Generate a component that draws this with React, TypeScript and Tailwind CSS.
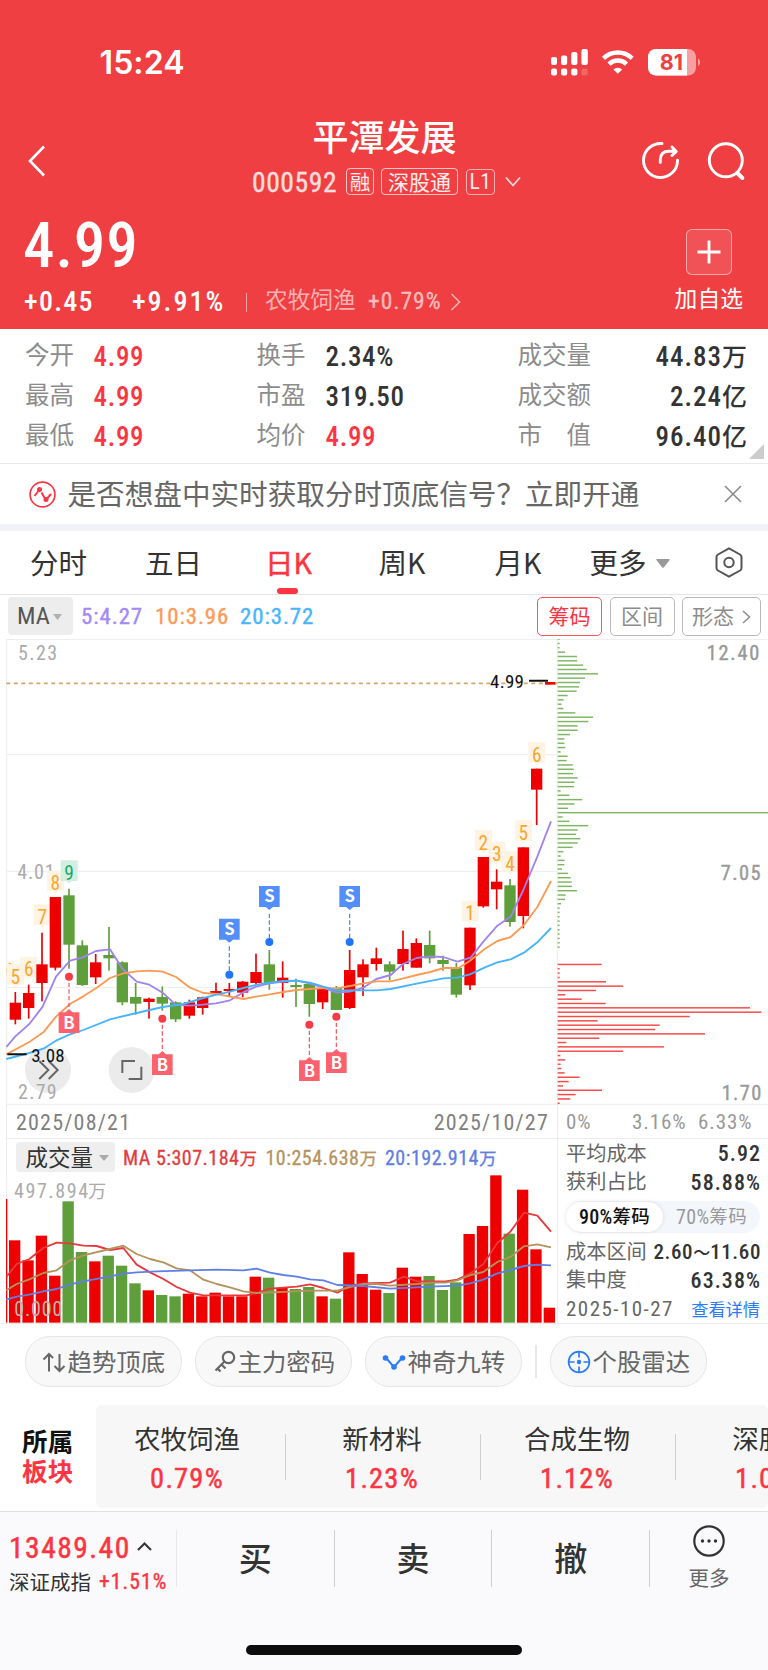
import type { ReactNode } from 'react';

const NUM = "font-['Roboto_Condensed','Noto_Sans_CJK_SC',sans-serif]";
const NUM_FAMILY = "'Roboto Condensed','Noto Sans CJK SC',sans-serif";
const RED = '#ee0000';
const GREEN = '#5f9f3b';

// x centre, high, body top, body bottom, low, rising
type Candle = [number, number, number, number, number, boolean];
const candles: Candle[] = [
  [46, 1086, 1118, 1169, 1183, true],
  [86, 1064, 1089, 1134, 1166, true],
  [126, 908, 1003, 1059, 1114, true],
  [166, 801, 801, 1013, 1021, true],
  [207, 776, 796, 944, 1016, false],
  [247, 931, 946, 1065, 1068, false],
  [287, 972, 997, 1042, 1062, true],
  [327, 891, 975, 985, 1022, false],
  [367, 994, 997, 1117, 1126, false],
  [407, 1059, 1101, 1121, 1154, false],
  [447, 1103, 1106, 1116, 1166, true],
  [487, 1069, 1101, 1121, 1142, false],
  [527, 1114, 1117, 1168, 1176, false],
  [568, 1109, 1117, 1157, 1166, true],
  [608, 1100, 1102, 1134, 1154, true],
  [648, 1058, 1083, 1090, 1090, true],
  [688, 1059, 1077, 1083, 1100, true],
  [728, 1053, 1055, 1088, 1102, true],
  [768, 971, 1026, 1059, 1062, true],
  [808, 960, 1003, 1059, 1079, false],
  [848, 994, 1043, 1059, 1103, true],
  [888, 1046, 1065, 1071, 1131, false],
  [928, 1058, 1062, 1122, 1160, false],
  [968, 1075, 1077, 1117, 1137, true],
  [1009, 1068, 1074, 1140, 1140, false],
  [1049, 960, 1020, 1134, 1137, true],
  [1089, 988, 1003, 1042, 1098, true],
  [1129, 953, 985, 1002, 1022, true],
  [1169, 994, 1003, 1025, 1051, false],
  [1209, 902, 957, 1002, 1022, true],
  [1249, 925, 939, 1013, 1013, true],
  [1289, 902, 945, 985, 1000, false],
  [1329, 977, 990, 1002, 1022, false],
  [1369, 999, 1014, 1094, 1103, false],
  [1410, 893, 893, 1066, 1080, true],
  [1450, 681, 681, 829, 833, true],
  [1490, 718, 755, 778, 838, true],
  [1530, 747, 766, 876, 890, false],
  [1570, 652, 652, 858, 895, true],
  [1610, 416, 416, 479, 585, true],
];

const ma5 =
  '19,1251 46,1219 88,1182 128,1130 168,1040 210,992 248,982 288,963 330,958 368,1017 410,1055 448,1064 488,1088 527,1124 568,1127 608,1124 648,1120 690,1111 728,1088 768,1070 810,1060 850,1055 890,1052 928,1060 970,1073 1010,1088 1050,1085 1090,1073 1129,1047 1172,1035 1209,1002 1250,984 1290,979 1330,981 1372,995 1412,983 1450,935 1492,887 1532,860 1570,780 1612,680 1653,574';
const ma10 =
  '19,1273 88,1236 130,1207 168,1160 210,1122 250,1099 290,1073 330,1044 370,1030 410,1024 448,1022 488,1025 528,1041 570,1073 610,1089 650,1092 690,1100 730,1107 768,1100 810,1093 850,1086 890,1080 928,1077 970,1074 1010,1075 1050,1068 1090,1060 1130,1054 1172,1054 1210,1045 1250,1035 1290,1026 1332,1014 1376,1014 1410,992 1455,956 1492,933 1532,921 1572,885 1612,831 1653,753';
const ma20 =
  '19,1287 88,1269 130,1256 168,1232 210,1213 250,1200 330,1168 410,1149 488,1131 550,1122 610,1104 650,1094 690,1085 730,1074 770,1064 810,1058 850,1053 890,1052 930,1058 970,1070 1010,1081 1130,1081 1172,1077 1250,1061 1330,1045 1372,1043 1410,1033 1455,1012 1492,997 1532,988 1572,968 1612,937 1653,894';

const turns: [string, number, number, boolean?][] = [
  ['5', 46, 1042],
  ['6', 86, 1020],
  ['7', 127, 863],
  ['8', 166, 762],
  ['9', 207, 731, true],
  ['1', 1410, 852],
  ['2', 1450, 640],
  ['3', 1490, 675],
  ['4', 1530, 703],
  ['5', 1570, 611],
  ['6', 1610, 376],
];

const sells: [number, number][] = [[688, 1034], [808, 936], [1049, 936]];
const buys: [number, number][] = [[207, 1040], [487, 1166], [928, 1184], [1009, 1160]];

const chips = [
  6, 6, 6, 22, 58, 59, 76, 87, 121, 82, 67, 64, 57, 30, 18, 12, 17, 53, 106, 92, 60, 60, 37, 20, 20, 23, 9, 30, 27,
  45, 48, 46, 60, 51, 49, 9, 35, 74, 50, 31, 631, 15, 35, 92, 60, 55, 68, 60, 45, 17, 9, 21, 20, 13, 31, 39, 42, 43,
  58, 24, 22, 10, 6, 6, 6, 6, 6, 6, 6, 6, 6, 6, 0, 0, 0, 132, 6, 6, 6, 145, 196, 115, 23, 72, 144, 577, 611, 396,
  120, 306, 292, 442, 125, 26, 319, 196, 8, 23, 9, 11, 21, 66, 33, 16, 133, 54, 38, 6,
];

const volumes: [number, boolean][] = [
  [437, true], [497, true], [423, true], [543, true], [320, false], [472, false], [500, true], [483, false],
  [513, false], [566, false], [587, true], [601, false], [605, false], [597, true], [605, true], [594, true],
  [605, true], [605, true], [546, true], [549, false], [580, true], [583, false], [577, false], [605, true],
  [612, false], [473, true], [538, true], [585, true], [595, false], [519, true], [546, true], [544, false],
  [586, false], [563, false], [418, true], [394, true], [242, true], [417, false], [285, true], [464, true],
  [639, true],
];
const vol5 =
  '19,547 50,508 88,493 130,460 170,444 210,446 250,453 290,454 330,466 370,460 410,510 450,533 490,553 530,577 570,594 610,602 740,602 770,595 810,582 850,579 890,576 930,569 970,580 1012,594 1050,573 1090,566 1170,564 1212,546 1252,560 1290,560 1336,560 1372,555 1410,537 1450,508 1492,445 1532,410 1572,354 1612,363 1653,411';
const vol10 =
  '19,587 50,568 88,554 130,535 170,527 210,497 250,482 330,463 370,453 410,478 450,493 490,503 530,521 570,527 610,555 650,568 690,578 730,590 770,595 870,591 930,588 1012,588 1050,577 1090,568 1130,568 1170,573 1250,568 1290,564 1336,564 1372,557 1412,541 1450,532 1492,502 1532,486 1572,455 1612,449 1653,458';
const vol20 =
  '19,615 50,606 88,600 130,590 170,583 210,569 250,560 330,545 370,537 410,533 470,530 570,527 650,525 730,527 770,522 810,534 850,541 890,546 930,554 970,557 1012,571 1090,574 1170,582 1250,578 1290,576 1372,573 1410,566 1450,555 1492,536 1532,526 1572,514 1612,510 1653,512';

function StatusBar() {
  return (
    <div className="flex h-[124px] items-start pl-[99.500px] pt-[47px]">
      <span className="w-[450.500px] font-['Inter',sans-serif] text-[32px] font-semibold leading-8 tracking-[0.100px]">15:24</span>
      <svg className="mt-[2px] h-[27px] w-[154px]" viewBox="0 0 154 27" fill="#fff">
        <rect x="1" y="8" width="6" height="8" rx="2" />
        <rect x="11" y="6.500" width="6.200" height="9.500" rx="2" />
        <rect x="21.200" y="3" width="6.200" height="13" rx="2" />
        <rect x="31.400" y="0" width="6.400" height="16" rx="2" />
        <rect x="1" y="19.500" width="6" height="7" rx="2" />
        <rect x="11" y="19.500" width="6.200" height="7" rx="2" />
        <rect x="21.200" y="19.500" width="6.200" height="7" rx="2" />
        <rect x="31.400" y="19.500" width="6.400" height="7" rx="2" opacity="0.2" />
        <g fill="none" stroke="#fff" strokeWidth="4.400">
          <path d="M53.500 9.300a20.500 20.500 0 0 1 28.600 0" />
          <path d="M59 15.100a12.600 12.600 0 0 1 17.600 0" />
        </g>
        <path d="M67.800 24.800l-4.400-4.400a6.400 6.400 0 0 1 8.800 0z" />
        <rect x="98" y="0" width="48" height="26.500" rx="8" opacity="0.5" />
        <path d="M106 0h31v26.500h-31a8 8 0 0 1-8-8V8a8 8 0 0 1 8-8z" />
        <path d="M148 9.500c2.800 1 2.800 6.400 0 7.400z" opacity="0.5" />
        <text x="121.500" y="21" textAnchor="middle" fontFamily="Inter, sans-serif" fontWeight="700" fontSize="21.500" fill="#ef3f42">81</text>
      </svg>
    </div>
  );
}

function Header() {
  return (
    <header className="h-[329px] bg-[#ef3f42] text-white">
      <StatusBar />
      <div className="-mt-[8px] flex h-[89px]">
        <svg className="ml-[27px] mt-[29px] h-[32px] w-[21px]" viewBox="0 0 21 32" fill="none" stroke="#fff" strokeWidth="2.600">
          <path d="M17 1.500L3 16l14 14.500" />
        </svg>
        <div className="flex w-[672px] shrink-0 pl-[204px]">
          <div className="w-[274px]">
            <div className="ml-[-9px] -mt-[2px] text-center text-[36px] font-medium leading-[42px]">平潭发展</div>
            <div className="mt-[10px] flex h-[31px] items-center whitespace-nowrap">
              <span className={`${NUM} w-[94px] pt-[2px] text-[27.500px] leading-none tracking-[0.600px] text-white/80 [-webkit-text-stroke:0.3px]`}>000592</span>
              <span className="flex h-[27px] w-[28px] items-center justify-center rounded-[4px] border-[1.500px] border-white/70 pb-px text-[20.500px] leading-none text-white/90">融</span>
              <span className="ml-[7px] flex h-[27px] w-[77px] items-center justify-center rounded-[4px] border-[1.500px] border-white/70 pb-px text-[21px] leading-none text-white/90">深股通</span>
              <span className={`${NUM} ml-[8px] flex h-[26px] w-[29px] items-center justify-center rounded-[4px] border-[1.500px] border-white/60 text-[21.500px] leading-none tracking-[0.500px] text-white/90`}>L1</span>
              <svg className="ml-[10px] h-[12px] w-[16px]" viewBox="0 0 16 12" fill="none" stroke="#fff" strokeOpacity="0.8" strokeWidth="1.800">
                <path d="M1 1.500l7 8 7-8" />
              </svg>
            </div>
          </div>
        </div>
        <svg className="-ml-[78px] mt-[25px] h-[40px] w-[106px] shrink-0" viewBox="0 0 106 40" fill="none" stroke="#fff" strokeWidth="2.900" strokeLinecap="round">
          <path d="M20 2.500a17 17 0 1 0 15.500 16.800" />
          <path d="M18.300 21.500v-2.700q.2-8.500 8.500-8.500h6.500M30 6l4.300 4.500-4.300 4" strokeLinejoin="round" />
          <circle cx="83.800" cy="19.300" r="16.500" />
          <path d="M95.300 32l5 5" strokeWidth="4" />
        </svg>
      </div>
      <div className="flex h-[124px] justify-between pl-[24px] pr-[25px]">
        <div>
          <div className={`${NUM} mt-[8px] ml-[-1px] text-[63px] font-medium leading-[65px] tracking-[0.900px]`}>4.99</div>
          <div className={`${NUM} mt-[9px] flex h-[30px] items-center whitespace-nowrap leading-none`}>
            <span className="w-[108px] text-[28px] font-medium tracking-[1.300px]">+0.45</span>
            <span className="w-[114px] text-[28px] font-medium tracking-[2px]">+9.91%</span>
            <span className="h-[19px] w-px bg-white/50" />
            <span className="ml-[18px] w-[103px] pb-[5px] font-['Noto_Sans_CJK_SC',sans-serif] text-[22.700px] text-white/60">农牧饲渔</span>
            <span className="text-[23.500px] tracking-[1px] text-white/60 [-webkit-text-stroke:0.3px]">+0.79%</span>
            <svg className="ml-[8px] h-[18px] w-[12px]" viewBox="0 0 12 18" fill="none" stroke="#fff" strokeOpacity="0.6" strokeWidth="1.600">
              <path d="M1.500 1l8 8-8 8" />
            </svg>
          </div>
        </div>
        <div className="flex flex-col items-center pt-[24px]">
          <div className="-ml-px flex h-[46px] w-[46px] items-center justify-center rounded-[6px] border-[1.500px] border-white/50 bg-white/10">
            <svg className="h-[24px] w-[24px]" viewBox="0 0 24 24" stroke="#fff" strokeWidth="2.800">
              <path d="M12 0.500v23M0.500 12h23" />
            </svg>
          </div>
          <div className="-ml-px mt-[11px] text-[22.800px] leading-[24px]">加自选</div>
        </div>
      </div>
    </header>
  );
}

const stats = [
  ['今开', '4.99', true, '换手', '2.34%', false, '成交量', '44.83万'],
  ['最高', '4.99', true, '市盈', '319.50', false, '成交额', '2.24亿'],
  ['最低', '4.99', true, '均价', '4.99', true, '市　值', '96.40亿'],
] as const;

function Stats() {
  return (
    <section className="flex h-[135px] border-b border-[#e9e9e9] pt-[8px]">
      <div className="w-[747px] pl-[25px]">
        {stats.map((r) => (
          <div key={r[0]} className={`${NUM} flex h-[40px] items-center text-[27px] font-medium leading-none tracking-[0.700px] text-[#333]`}>
            <span className="w-[68.500px] pb-[6px] font-['Noto_Sans_CJK_SC',sans-serif] text-[24.500px] font-normal tracking-normal text-[#8c8c8c]">{r[0]}</span>
            <span className="w-[163px] text-[#fb3541]">{r[1]}</span>
            <span className="w-[69px] pb-[6px] font-['Noto_Sans_CJK_SC',sans-serif] text-[24.500px] font-normal tracking-normal text-[#8c8c8c]">{r[3]}</span>
            <span className={r[5] ? 'w-[192px] text-[#fb3541]' : 'w-[192px]'}>{r[4]}</span>
            <span className="pb-[6px] font-['Noto_Sans_CJK_SC',sans-serif] text-[24.500px] font-normal tracking-normal text-[#8c8c8c]">{r[6]}</span>
            <span className="ml-auto flex items-baseline tracking-[1px]">
              {r[7].slice(0, -1)}
              <span className="text-[25px] tracking-normal">{r[7].slice(-1)}</span>
            </span>
          </div>
        ))}
      </div>
      <svg className="ml-[2px] mt-[107px] h-[15px] w-[15px]" viewBox="0 0 15 15">
        <path d="M15 0v15H0z" fill="#ccc" />
      </svg>
    </section>
  );
}

function Banner() {
  return (
    <section className="flex h-[60px] items-center pl-[28.500px] text-[#666]">
      <svg className="h-[27px] w-[27px]" viewBox="0 0 27 27" fill="none" stroke="#fb3541" strokeWidth="1.700">
        <circle cx="13.500" cy="13.500" r="12.400" />
        <path d="M5.500 15l4-5M12.500 11.500l3.500 6M18.500 17l3.500-4" strokeWidth="2" />
        <circle cx="10.500" cy="8.500" r="2.500" fill="#fb3541" stroke="none" />
        <circle cx="17" cy="18.500" r="2.500" fill="#fb3541" stroke="none" />
      </svg>
      <span className="ml-[12px] w-[656.500px] whitespace-nowrap pb-[2px] text-[28.600px] leading-none">是否想盘中实时获取分时顶底信号？立即开通</span>
      <svg className="h-[18px] w-[18px]" viewBox="0 0 18 18" stroke="#8a8a8a" strokeWidth="1.600">
        <path d="M1 1l16 16M17 1L1 17" />
      </svg>
    </section>
  );
}

function Tabs() {
  return (
    <nav className="flex h-[64px] border-b border-[#e4e4e4] pl-[30px] text-[28.500px] leading-[62px] text-[#333]">
      <span className="w-[115px]">分时</span>
      <span className="w-[120px]">五日</span>
      <div className="flex w-[113.500px] flex-col text-[#fb3541]">
        <span className="h-[57px] [-webkit-text-stroke:0.5px]">日K</span>
        <span className="ml-[12px] h-[6px] w-[21px] shrink-0 rounded-[3px] bg-[#fb3541]" />
      </div>
      <span className="w-[116px]">周K</span>
      <span className="w-[95px]">月K</span>
      <span className="w-[66.500px]">更多</span>
      <svg className="mt-[28px] h-[9px] w-[14px]" viewBox="0 0 14 9">
        <path d="M1 0h12q1.200 0 .6 1L8 8.300q-1 1-2 0L.4 1Q-.2 0 1 0z" fill="#999" />
      </svg>
      <svg className="ml-[45px] mt-[16px] h-[31px] w-[28px]" viewBox="0 0 28 31" fill="none" stroke="#555" strokeWidth="2">
        <path d="M14 1.300L25 7.500q1.500 1 1.500 2.600v10.800q0 1.600-1.500 2.600L14 29.700 3 23.500q-1.500-1-1.500-2.600V10.100q0-1.600 1.500-2.600z" strokeLinejoin="round" />
        <circle cx="14" cy="15.500" r="4.700" />
      </svg>
    </nav>
  );
}

function ToolButton({ active, wide, children }: { active?: boolean; wide?: boolean; children: ReactNode }) {
  return (
    <span
      className={`flex h-[39px] items-center justify-center gap-[8px] rounded-[5px] border-[1.500px] pb-[2px] text-[21px] leading-none ${
        active ? 'border-[#fb5560] text-[#fb3541]' : 'border-[#b8b8b8] text-[#8c8c8c]'
      } ${wide ? 'w-[79px]' : 'w-[65px]'}`}
    >
      {children}
    </span>
  );
}

function MaRow() {
  return (
    <div className={`${NUM} flex h-[44px] pl-[8px] pt-[2px] leading-none`}>
      <span className="flex h-[38px] w-[65px] items-center rounded-[4px] bg-[#ededed] pl-[9px] pt-px text-[24.500px] text-[#555]">
        MA
        <svg className="ml-[3px] h-[6px] w-[9px]" viewBox="0 0 9 6"><path d="M0 0h9L4.500 6z" fill="#b0b0b0" /></svg>
      </span>
      <span className="ml-[8px] flex h-[38px] w-[456px] items-center pt-[2px] text-[22.800px] tracking-[0.950px] [-webkit-text-stroke:0.4px]">
        <span className="w-[74px] text-[#a38af5]">5:4.27</span>
        <span className="w-[85px] text-[#fb9b5a]">10:3.96</span>
        <span className="text-[#48b5fb]">20:3.72</span>
      </span>
      <span className="flex gap-[7.500px] font-['Noto_Sans_CJK_SC',sans-serif] tracking-normal">
        <ToolButton active>筹码</ToolButton>
        <ToolButton>区间</ToolButton>
        <ToolButton wide>
          形态
          <svg className="mt-[2px] h-[14px] w-[9px]" viewBox="0 0 9 14" fill="none" stroke="#8c8c8c" strokeWidth="1.500"><path d="M1 1l6.500 6L1 13" /></svg>
        </ToolButton>
      </span>
    </div>
  );
}

function PriceChart() {
  return (
    <svg className="h-[466px] w-[768px]" viewBox="0 27 2304 1398" fontFamily={NUM_FAMILY}>
      <g stroke="#ececec" strokeWidth="3">
        <path d="M19 28H2304M19 374H1673M19 724H1673M19 1073H1673M19 1423H2304M20 27V1425M1672 27V1425" fill="none" />
      </g>
      <path d="M19 160H1672" stroke="#d6a76c" strokeWidth="5" strokeDasharray="12 10.500" />
      <g fill="#ababab" fontSize="60">
        <text x="54" y="90" textLength="117">5.23</text>
        <text x="52" y="748" textLength="112">4.01</text>
      </g>
      <circle cx="144" cy="1320" r="69" fill="#ebebeb" />
      <circle cx="395" cy="1320" r="69" fill="#ebebeb" />
      <text x="54" y="1408" textLength="116" fill="#ababab" fontSize="60">2.79</text>
      <g fill="none" stroke="#666" strokeWidth="6">
        <path d="M118 1293l27 27-27 27M146 1293l27 27-27 27" />
        <path d="M405 1293H367v36M386 1347h38v-37" />
      </g>

      <rect x="20" y="993" width="22" height="62" fill="#fff3e4" />
      <svg x="20" y="993" width="20" height="70" viewBox="20 993 20 70">
        <text x="12" y="1037" fontSize="54" fill="#f9a62b">4</text>
      </svg>
      {turns.map(([, x, y, hot]) => (
        <path key={x} d={`M${x - 25} ${y - 40}h51v62h-18l-8 8-8-8h-17z`} fill={hot ? '#d2efe1' : '#fff3e4'} />
      ))}

      {candles.map(([x, hi, top, bottom, lo, up]) => (
        <g key={x} fill={up ? RED : GREEN}>
          <rect x={x - 2.5} y={hi} width="5" height={lo - hi} />
          <rect x={x - 17} y={top} width="34" height={bottom - top} />
        </g>
      ))}
      <rect x="1635" y="156" width="31" height="8" fill={RED} />

      <g fill="none" strokeWidth="5.500" strokeLinejoin="round">
        <polyline points={ma5} stroke="#a084ee" />
        <polyline points={ma10} stroke="#fb9a55" />
        <polyline points={ma20} stroke="#45b4fb" />
      </g>

      {turns.map(([n, x, y, hot]) => (
        <text key={x} x={x} y={y + 19} textAnchor="middle" fontSize="58" fill={hot ? '#1ba866' : '#f9a62b'}>{n}</text>
      ))}

      {sells.map(([x, y]) => (
        <g key={x} fontFamily="'Noto Sans CJK SC',sans-serif">
          <path d={`M${x} ${y - 85}V${y - 12}`} stroke="#4a7fe8" strokeWidth="3.500" strokeDasharray="13 7" />
          <circle cx={x} cy={y} r="12" fill="#2274fb" />
          <path d={`M${x - 31} ${y - 168}h62v63h-20l-11 9-11-9h-20z`} fill="#528ffb" />
          <text x={x} y={y - 119} textAnchor="middle" fontSize="50" fontWeight="700" fill="#fff">S</text>
        </g>
      ))}
      {buys.map(([x, y]) => (
        <g key={x} fontFamily="'Noto Sans CJK SC',sans-serif">
          <path d={`M${x} ${y + 18}V${y + 96}`} stroke="#f0525c" strokeWidth="3.500" strokeDasharray="13 7" />
          <circle cx={x} cy={y} r="12" fill="#f73a45" />
          <path d={`M${x - 31} ${y + 107}h20l11-10 11 10h20v62h-62z`} fill="#fb626e" />
          <text x={x} y={y + 156} textAnchor="middle" fontSize="50" fontWeight="700" fill="#fff">B</text>
        </g>
      ))}

      <g fill="#111" fontSize="57">
        <path d="M22 1273h58M1587 152h57" stroke="#111" strokeWidth="6" />
        <text x="94" y="1295" textLength="100">3.08</text>
        <text x="1470" y="173" textLength="102">4.99</text>
      </g>

      {chips.map((w, i) =>
        w ? <rect key={i} x="1673" y={25.2 + i * 13.013} width={w} height="4.400" fill={i < 73 ? '#7fb664' : '#f34a4a'} /> : null,
      )}
      <g fill="#999" stroke="#999" strokeWidth="1.200" fontSize="61" textAnchor="end">
        <text x="2278" y="91" textLength="158">12.40</text>
        <text x="2282" y="749" textLength="120">7.05</text>
        <text x="2284" y="1409" textLength="119">1.70</text>
      </g>
    </svg>
  );
}

function DateRow() {
  return (
    <div className={`${NUM} ml-[6px] flex h-[34px] border-b border-l border-[#ececec] pl-[9px] text-[22px] leading-[35px] tracking-[1.200px] text-[#808080]`}>
      <span className="w-[117px]">2025/08/21</span>
      <span className="w-[425px] border-r border-[#ececec] pr-[8px] text-right">2025/10/27</span>
      <span className="flex pl-[8px] text-[21px] tracking-[0.900px] text-[#999]">
        <span className="w-[66px]">0%</span>
        <span className="w-[66px]">3.16%</span>
        <span>6.33%</span>
      </span>
    </div>
  );
}

function VolumePanel() {
  return (
    <div className="w-[558px] border-r border-[#ececec]">
      <div className="ml-[6px] flex h-[35px] items-center border-l border-[#ececec] pl-[9px] pt-px">
        <span className="flex h-[30px] w-[99px] items-center rounded-[4px] bg-[#eee] pb-[2px] pl-[9.500px] text-[22.500px] leading-none text-[#333]">
          成交量
          <svg className="ml-[6px] mt-[3px] h-[6px] w-[10px]" viewBox="0 0 10 6"><path d="M0 0h10L5 6z" fill="#aaa" /></svg>
        </span>
        <span className={`${NUM} ml-[8px] flex items-center whitespace-nowrap pt-[3px] text-[20px] leading-none tracking-[0.500px] [-webkit-text-stroke:0.3px]`}>
          <span className="w-[142.500px] text-[#e53a3e]">MA 5:307.184<span className="text-[17.500px]">万</span></span>
          <span className="w-[119.500px] text-[#b5935e]">10:254.638<span className="text-[17.500px]">万</span></span>
          <span className="text-[#5f7de2]">20:192.914<span className="text-[17.500px]">万</span></span>
        </span>
      </div>
      <svg className="h-[149px] w-[557px]" viewBox="0 238 1671 447" fontFamily={NUM_FAMILY}>
        <path d="M20 238V313" stroke="#ececec" strokeWidth="3" />
        <rect x="18" y="313" width="4" height="371" fill={RED} />
        {volumes.map(([top, up], i) => (
          <rect key={i} x={27 + i * 40.1} y={top} width="34" height={684 - top} fill={up ? RED : GREEN} />
        ))}
        <g fill="none" strokeWidth="5.500" strokeLinejoin="round">
          <polyline points={vol5} stroke="#e8383c" />
          <polyline points={vol10} stroke="#b3925c" />
          <polyline points={vol20} stroke="#5f7fe4" />
        </g>
        <g fill="#ababab">
          <text x="42" y="311" fontSize="60" textLength="222">497.894</text>
          <text x="264" y="311" fontSize="55">万</text>
          <text x="43" y="663" fontSize="60" textLength="144" fill="#b9b3b0">0.000</text>
        </g>
      </svg>
    </div>
  );
}

function CostRow({ label, value }: { label: string; value: ReactNode }) {
  return (
    <div className="flex h-[28.500px] items-center justify-between whitespace-nowrap leading-none">
      <span className="pb-[3px] text-[20.200px] text-[#666]">{label}</span>
      <span className={`${NUM} mr-[-1px] text-[22px] font-medium tracking-[1.050px] text-[#333]`}>{value}</span>
    </div>
  );
}

function CostPanel() {
  return (
    <div className="w-[210px] pl-[8px] pr-[8px] pt-px">
      <CostRow label="平均成本" value="5.92" />
      <CostRow label="获利占比" value="58.88%" />
      <div className={`${NUM} mt-[4px] flex h-[32px] items-center rounded-full bg-[#f3f7fc] text-[20px] leading-none`}>
        <span className="flex h-[30px] w-[97px] items-center justify-center rounded-full bg-white font-medium tracking-[0.300px] text-[#111] shadow-[0_0_4px_rgba(0,0,0,0.12)]">90%<span className="text-[18.500px]">筹码</span></span>
        <span className="flex flex-1 items-center justify-center tracking-[0.300px] text-[#999]">70%<span className="text-[18.500px]">筹码</span></span>
      </div>
      <div className="mt-[5px]">
        <CostRow
          label="成本区间"
          value={<span className="text-[21px] tracking-[0.600px]">2.60<span className="text-[17px] tracking-normal">～</span>11.60</span>}
        />
        <CostRow label="集中度" value="63.38%" />
      </div>
      <div className="flex h-[29px] items-center justify-between leading-none">
        <span className={`${NUM} text-[21px] tracking-[1.450px] text-[#666]`}>2025-10-27</span>
        <span className="whitespace-nowrap pb-[2px] text-[17.200px] text-[#2b7bfa]">查看详情</span>
      </div>
    </div>
  );
}

function Pill({ icon, children }: { icon: ReactNode; children: ReactNode }) {
  return (
    <span className="flex h-[51px] w-[157px] items-center rounded-[25px] border border-[#e6e6e6] bg-[#f8f8f8] pl-[16px]">
      {icon}
      <span className="ml-[1.500px] whitespace-nowrap text-[24.400px] leading-none text-[#666]">{children}</span>
    </span>
  );
}

function Tools() {
  return (
    <section className="flex h-[81px] items-start gap-[13px] pl-[25px] pt-[12px]">
      <Pill
        icon={
          <svg className="h-[24px] w-[24px]" viewBox="0 0 24 24" fill="none" stroke="#666" strokeWidth="2">
            <path d="M7 21.500V5M1.500 9.500L7 4l4 4M17.500 4v16.500M12.500 16l5 5 5-5" />
          </svg>
        }
      >
        趋势顶底
      </Pill>
      <Pill
        icon={
          <svg className="h-[24px] w-[24px]" viewBox="0 0 24 24" fill="none" stroke="#666" strokeWidth="2.200">
            <circle cx="16.500" cy="7.500" r="5.700" />
            <path d="M12.500 11.500L3.500 20.500M9.500 14.500l4 4M5.500 18.500l3 3" />
          </svg>
        }
      >
        主力密码
      </Pill>
      <Pill
        icon={
          <svg className="h-[24px] w-[24px]" viewBox="0 0 24 24" fill="none" stroke="#2b7bfa" strokeWidth="2">
            <path d="M4 8l8 9 8-9" />
            <g fill="#2b7bfa" stroke="none">
              <circle cx="3.500" cy="8" r="2.800" />
              <circle cx="12" cy="17" r="2.800" />
              <circle cx="20.500" cy="8" r="2.800" />
            </g>
          </svg>
        }
      >
        神奇九转
      </Pill>
      <span className="mt-[9px] h-[33px] w-[2px] bg-[#e8e8e8]" />
      <Pill
        icon={
          <svg className="h-[24px] w-[24px]" viewBox="0 0 24 24" fill="none" stroke="#2b7bfa" strokeWidth="1.700">
            <circle cx="12" cy="12" r="10.400" />
            <path d="M12 1.500v6M12 16.500v6M1.500 12h6M16.500 12h6" />
            <circle cx="12" cy="12" r="2.200" fill="#2b7bfa" stroke="none" />
          </svg>
        }
      >
        个股雷达
      </Pill>
    </section>
  );
}

const sectors = [['农牧饲渔', '0.79%'], ['新材料', '1.23%'], ['合成生物', '1.12%'], ['深股通', '1.09%']];

function Sectors() {
  return (
    <section className="flex h-[107px] overflow-hidden border-b border-[#e0e0e0]">
      <div className="w-[96px] shrink-0 pl-[22px] pt-[19.500px] text-[25.500px] font-bold leading-[30px] tracking-[0.200px]">
        <div className="text-[#111]">所属</div>
        <div className="text-[#fb3541]">板块</div>
      </div>
      <div className="flex h-[103px] w-[672px] shrink-0 overflow-hidden rounded-[6px] bg-[#f7f7f7]">
        {sectors.map(([name, pct], i) => (
          <div key={name} className={i === 0 ? 'flex w-[190px] shrink-0 items-center' : 'flex w-[195px] shrink-0 items-center'}>
            <div className={i === 0 ? 'w-[189px] pr-[7px] pt-[3px] text-center' : 'w-[194px] pr-[2px] pt-[3px] text-center'}>
              <div className="text-[26.500px] leading-[32px] text-[#333]">{name}</div>
              <div className={`${NUM} mt-[9px] text-[28.500px] leading-[32px] tracking-[1.200px] text-[#fb3541] [-webkit-text-stroke:0.5px]`}>{pct}</div>
            </div>
            {i < 3 && <span className="h-[46px] w-px bg-[#cfcfcf]" />}
          </div>
        ))}
      </div>
    </section>
  );
}

function BottomBar() {
  return (
    <footer className="h-[159px] bg-[#fafafc]">
      <div className="flex h-[133px]">
        <div className="w-[176px] pl-[9px] pt-[20px]">
          <div className={`${NUM} flex h-[32px] items-center pt-px text-[29.500px] leading-none tracking-[1.500px] text-[#fb3541] [-webkit-text-stroke:0.5px]`}>
            13489.40
            <svg className="mb-[4px] ml-[6px] h-[9px] w-[15px] shrink-0" viewBox="0 0 15 9" fill="none" stroke="#333" strokeWidth="2"><path d="M1 8l6.500-6.500L14 8" /></svg>
          </div>
          <div className="mt-[6px] flex h-[24px] items-center whitespace-nowrap leading-none">
            <span className="w-[90px] pb-[2px] text-[20.500px] text-[#333]">深证成指</span>
            <span className={`${NUM} text-[21.500px] tracking-[1.100px] text-[#fb3541] [-webkit-text-stroke:0.4px]`}>+1.51%</span>
          </div>
        </div>
        <span className="mt-[18px] h-[57px] w-px bg-[#e8e8ea]" />
        {['买', '卖', '撤'].map((t) => (
          <div key={t} className="flex w-[157.700px]">
            <span className="flex-1 pt-[23px] text-center text-[33px] font-medium leading-[44px] text-[#333]">{t}</span>
            <span className="mt-[18px] h-[57px] w-px bg-[#cfcfd2]" />
          </div>
        ))}
        <div className="flex flex-1 flex-col items-center pt-[12.500px]">
          <svg className="h-[32px] w-[32px]" viewBox="0 0 32 32" fill="none" stroke="#333" strokeWidth="2.200">
            <circle cx="16" cy="16" r="14.700" />
            <g fill="#333" stroke="none">
              <circle cx="9.500" cy="16" r="1.700" />
              <circle cx="16" cy="16" r="1.700" />
              <circle cx="22.500" cy="16" r="1.700" />
            </g>
          </svg>
          <span className="mt-[9px] text-[20.500px] leading-[22px] text-[#666]">更多</span>
        </div>
      </div>
      <div className="ml-[246px] h-[10px] w-[276px] rounded-full bg-[#0d0d0d]" />
    </footer>
  );
}

export default function App() {
  return (
    <main className="h-[1670px] w-[768px] overflow-hidden bg-white font-['Noto_Sans_CJK_SC',sans-serif]">
      <Header />
      <Stats />
      <Banner />
      <div className="h-[7px] bg-[#f2f3f8]" />
      <Tabs />
      <MaRow />
      <div className="h-[466px]">
        <PriceChart />
      </div>
      <DateRow />
      <div className="flex h-[185px] border-b border-[#ececec]">
        <VolumePanel />
        <CostPanel />
      </div>
      <Tools />
      <Sectors />
      <BottomBar />
    </main>
  );
}
